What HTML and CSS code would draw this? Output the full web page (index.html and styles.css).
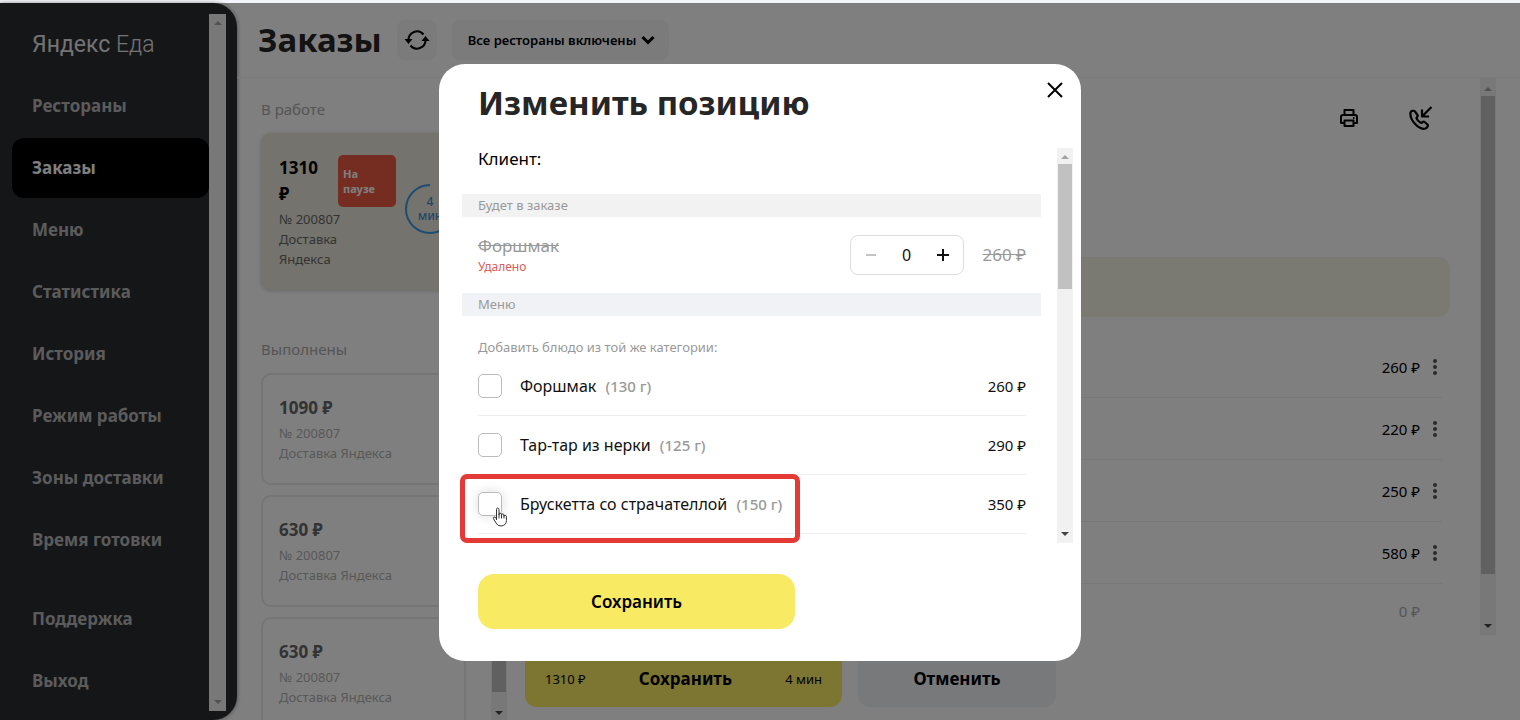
FILE: index.html
```html
<!DOCTYPE html>
<html lang="ru">
<head>
<meta charset="utf-8">
<title>Яндекс Еда — Заказы</title>
<link rel="stylesheet" href="styles.css">
</head>
<body>
<div class="app">
  <aside class="sidebar">
    <div class="sidebar-content">
      <div class="logo"><span class="logo-main">Яндекс</span> <span class="logo-sub">Еда</span></div>
      <nav class="nav">
        <a class="nav-link" href="#">Рестораны</a>
        <a class="nav-link active" href="#">Заказы</a>
        <a class="nav-link" href="#">Меню</a>
        <a class="nav-link" href="#">Статистика</a>
        <a class="nav-link" href="#">История</a>
        <a class="nav-link" href="#">Режим работы</a>
        <a class="nav-link" href="#">Зоны доставки</a>
        <a class="nav-link" href="#">Время готовки</a>
        <a class="nav-link secondary" href="#">Поддержка</a>
        <a class="nav-link" href="#">Выход</a>
      </nav>
    </div>
    <div class="scrollbar">
      <span class="arrow up"></span>
      <span class="arrow down"></span>
    </div>
  </aside>

  <main class="main">
    <header class="header">
      <h1 class="title">Заказы</h1>
      <button class="refresh" type="button" aria-label="Обновить">
        <svg width="26" height="26" viewBox="0 0 26 26" fill="none" stroke="#000" stroke-width="2">
          <path d="M4.500 13A8.500 8.500 0 0 1 19.500 7.500M21.500 13A8.500 8.500 0 0 1 6.500 18.500"/>
          <path d="M.5 12h8l-4 5zM17.500 14h8l-4-5z" fill="#000" stroke="none"/>
        </svg>
      </button>
      <button class="filter" type="button">Все рестораны включены
        <svg width="14" height="10" viewBox="0 0 14 10" fill="none" stroke="#000" stroke-width="3"><path d="M1.500 2L7 7.500 12.500 2"/></svg>
      </button>
    </header>

    <div class="workspace">
      <section class="orders">
        <div class="orders-list">
          <h2 class="group-title">В работе</h2>
          <article class="order current">
            <div class="order-info">
              <div class="order-sum">1310 ₽</div>
              <div class="order-meta">№ 200807</div>
              <div class="order-meta">Доставка Яндекса</div>
            </div>
            <div class="pause">На паузе</div>
            <div class="timer">
              <svg class="timer-ring" width="50" height="50" viewBox="0 0 50 50" fill="none" stroke="#3d9be6" stroke-width="2"><path d="M25 1A24 24 0 1 0 49 25"/></svg>
              <span>4<br>мин</span>
            </div>
          </article>
          <h2 class="group-title done-title">Выполнены</h2>
          <article class="order done">
            <div class="order-sum">1090 ₽</div>
            <div class="order-meta">№ 200807</div>
            <div class="order-meta">Доставка Яндекса</div>
          </article>
          <article class="order done">
            <div class="order-sum">630 ₽</div>
            <div class="order-meta">№ 200807</div>
            <div class="order-meta">Доставка Яндекса</div>
          </article>
          <article class="order done">
            <div class="order-sum">630 ₽</div>
            <div class="order-meta">№ 200807</div>
            <div class="order-meta">Доставка Яндекса</div>
          </article>
        </div>
        <div class="scrollbar">
          <span class="arrow up"></span>
          <span class="thumb"></span>
          <span class="arrow down dark"></span>
        </div>
      </section>

      <section class="detail">
        <div class="detail-scroll">
          <div class="detail-content">
            <div class="tools">
              <button class="tool" type="button" aria-label="Печать">
                <svg width="20" height="20" viewBox="0 0 20 20" fill="none" stroke="#000" stroke-width="2" stroke-linejoin="round">
                  <path d="M5.500 7V2h9v5M5 15H2V9q0-2 2-2h12q2 0 2 2v6h-3M5.500 12.500h9V18h-9zM14 10h1.500"/>
                </svg>
              </button>
              <button class="tool" type="button" aria-label="Позвонить">
                <svg width="24" height="24" viewBox="0 0 24 24" fill="none" stroke="#000" stroke-width="2.200" stroke-linejoin="round">
                  <path d="M2.500 6.500C1.500 14 11 24.500 17.500 22.500c2-1 3-3 2-4l-3-2.500c-1.500-1-2 .5-3 1-2-.5-4.500-3-5-5 .5-1.500 2-1.500 1-3L7 5.500c-1.500-1.500-4-.5-4.500 1z"/>
                  <path d="M23.500 1L14.500 10M14 3.500V10.500H21"/>
                </svg>
              </button>
            </div>
            <div class="notice"></div>
            <ul class="items">
              <li class="item"><span>260 ₽</span><button class="more" type="button" aria-label="Ещё"><i></i><i></i><i></i></button></li>
              <li class="item"><span>220 ₽</span><button class="more" type="button" aria-label="Ещё"><i></i><i></i><i></i></button></li>
              <li class="item"><span>250 ₽</span><button class="more" type="button" aria-label="Ещё"><i></i><i></i><i></i></button></li>
              <li class="item"><span>580 ₽</span><button class="more" type="button" aria-label="Ещё"><i></i><i></i><i></i></button></li>
            </ul>
            <div class="total">0 ₽</div>
          </div>
          <div class="scrollbar">
            <span class="arrow up"></span>
            <span class="thumb"></span>
            <span class="arrow down dark"></span>
          </div>
        </div>
        <footer class="actions">
          <button class="accept" type="button"><span>1310 ₽</span><b>Сохранить</b><span>4 мин</span></button>
          <button class="cancel" type="button">Отменить</button>
        </footer>
      </section>
    </div>
  </main>
</div>

<div class="overlay">
  <div class="modal" role="dialog" aria-labelledby="modal-title">
    <button class="close" type="button" aria-label="Закрыть">
      <svg width="16" height="16" viewBox="0 0 16 16" fill="none" stroke="#000" stroke-width="2"><path d="M1 1l14 14M15 1L1 15"/></svg>
    </button>
    <h2 class="modal-title" id="modal-title">Изменить позицию</h2>
    <div class="modal-scroll">
      <div class="modal-content">
        <p class="client">Клиент:</p>
        <h3 class="band">Будет в заказе</h3>
        <div class="position">
          <div class="position-name"><s>Форшмак</s><span class="removed">Удалено</span></div>
          <div class="stepper">
            <button class="step" type="button" aria-label="Меньше" disabled><svg width="12" height="12" viewBox="0 0 12 12" stroke="#c4c4c4" stroke-width="2"><path d="M1 6h10"/></svg></button>
            <output>0</output>
            <button class="step" type="button" aria-label="Больше"><svg width="12" height="12" viewBox="0 0 12 12" stroke="#111" stroke-width="2"><path d="M0 6h12M6 0v12"/></svg></button>
          </div>
          <s class="old-price">260 ₽</s>
        </div>
        <h3 class="band menu-band">Меню</h3>
        <p class="hint">Добавить блюдо из той же категории:</p>
        <ul class="dishes">
          <li class="dish">
            <input class="check" type="checkbox" id="dish-1">
            <label for="dish-1">Форшмак <span class="weight">(130 г)</span></label>
            <span class="price">260 ₽</span>
          </li>
          <li class="dish">
            <input class="check" type="checkbox" id="dish-2">
            <label for="dish-2">Тар-тар из нерки <span class="weight">(125 г)</span></label>
            <span class="price">290 ₽</span>
          </li>
          <li class="dish">
            <input class="check hovered" type="checkbox" id="dish-3">
            <label for="dish-3">Брускетта со страчателлой <span class="weight">(150 г)</span></label>
            <span class="price">350 ₽</span>
            <span class="highlight"></span>
            <svg class="pointer" width="16" height="20" viewBox="0 0 16 20" fill="#fff" stroke="#333" stroke-linejoin="round" stroke-linecap="round">
              <path d="M4.500 12.500V2.500Q4.500 1 5.700 1T7 2.500V8v-.8q0-1 1.200-1t1.300 1V8.500v-.6q0-1 1.200-1t1.200 1v1.300q0-.9 1.200-.9t1.300 1.200v4q0 5-5.400 5.500-3.500 0-5-3L1.500 11.700q-.7-1.200.4-1.700t2.100 1z"/>
              <path d="M7 8v3M9.500 8.500V11M12 9v2" fill="none"/>
            </svg>
          </li>
        </ul>
      </div>
      <div class="scrollbar">
        <span class="arrow up"></span>
        <span class="thumb"></span>
        <span class="arrow down dark"></span>
      </div>
    </div>
    <button class="save" type="button">Сохранить</button>
  </div>
</div>
</body>
</html>
```
FILE: styles.css
```css
* { box-sizing: border-box; }

body {
  margin: 0;
  padding-top: 3px;
  height: 100vh;
  overflow: hidden;
  background: #f4f5fa;
  color: #000;
  font: 16px/20px "Noto Sans", "Open Sans", sans-serif;
}

h1, h2, h3, p, ul { margin: 0; padding: 0; }
ul { list-style: none; }
button { margin: 0; padding: 0; border: 0; background: none; color: inherit; font: inherit; cursor: pointer; }
svg { display: block; }

.app { display: flex; height: 100%; background: #fff; }

/* Scrollbars */
.scrollbar {
  display: flex;
  flex: none;
  flex-direction: column;
  align-items: center;
  width: 17px;
  padding: 7px 0;
  background: #f1f1f1;
}
.arrow { border: 4px solid transparent; }
.arrow.up { border-top: 0; border-bottom-color: #a3a3a3; }
.arrow.down { margin-top: auto; border-bottom: 0; border-top-color: #a3a3a3; }
.arrow.dark { border-top-color: #444; }
.thumb { width: 14px; margin-top: 6px; background: #c1c1c1; }

/* Sidebar */
.sidebar {
  display: flex;
  flex: none;
  width: 237px;
  padding: 11px 11px 9px 0;
  border-radius: 0 24px 24px 0;
  background: #2a2c30;
  box-shadow: 0 0 4px #888;
}
.sidebar-content { flex: 1; padding-left: 12px; }
.logo {
  padding: 13px 0 13px 20px;
  color: #e6e6e6;
  font: 23px/36px "Roboto", sans-serif;
  white-space: nowrap;
}
.logo-sub { font-weight: 300; }
.nav { display: flex; flex-direction: column; gap: 2px; }
.nav-link {
  padding: 20px;
  border-radius: 12px;
  color: #b6b6b8;
  font-size: 17px;
  font-weight: 700;
  text-decoration: none;
}
.nav-link.active { background: #000; color: #fff; }
.nav-link.secondary { margin-top: 17px; }

/* Header */
.main { display: flex; flex: 1; flex-direction: column; min-width: 0; }
.header {
  display: flex;
  flex: none;
  align-items: center;
  height: 75px;
  padding-left: 21px;
  border-bottom: 1px solid #f4f4f4;
}
.title { color: #262626; font-size: 33px; line-height: 48px; }
.refresh, .filter { border-radius: 8px; background: #f7f7f7; }
.refresh { display: grid; place-items: center; width: 40px; height: 40px; margin-left: 15px; }
.filter {
  display: flex;
  align-items: center;
  gap: 5px;
  height: 40px;
  margin-left: 15px;
  padding: 0 14px 0 16px;
  font-size: 13px;
  font-weight: 600;
}

/* Orders column */
.workspace { display: flex; flex: 1; min-height: 0; }
.orders { display: flex; flex: none; width: 270px; padding-left: 24px; overflow: hidden; }
.orders-list { flex: 1; min-width: 0; padding: 21px 25px 0 0; }
.orders .scrollbar { padding: 7px 0 5px; width: 16px; }
.orders .thumb { flex: 1; }
.orders .arrow.down { margin-top: 19px; }
.group-title { margin-bottom: 14px; color: #aaa; font-size: 15px; font-weight: 400; line-height: 20px; }
.done-title { margin-top: 49px; }
.order { padding: 20px 16px; border: 2px solid #eaeaea; border-radius: 10px; }
.order-sum { margin-bottom: 2px; font-size: 17px; font-weight: 700; line-height: 26px; }
.order-meta { color: #666; font-size: 13px; line-height: 20px; }
.order.current {
  display: flex;
  gap: 9px;
  height: 157px;
  padding-right: 8px;
  border-color: transparent;
  background: #e9e7da;
  box-shadow: 0 1px 4px #ccc;
}
.order-info { flex: none; width: 50px; }
.current .order-meta:not(:last-child) { white-space: nowrap; }
.pause {
  flex: none;
  width: 58px;
  height: 52px;
  padding: 11px 5px;
  border-radius: 5px;
  background: #ec5a42;
  color: #fff;
  font-size: 11px;
  font-weight: 700;
  line-height: 15px;
}
.timer {
  display: grid;
  flex: none;
  place-items: center;
  width: 50px;
  height: 50px;
  margin-top: 29px;
  color: #3d8fd0;
  font-size: 12px;
  font-weight: 500;
  line-height: 14px;
  text-align: center;
}
.timer > * { grid-area: 1 / 1; }
.order.done { height: 112px; margin-bottom: 10px; }
.done .order-sum { color: #666; }
.done .order-meta { color: #b0b0b0; }

/* Order details */
.detail { display: flex; flex: 1; flex-direction: column; min-width: 0; padding: 0 24px 13px 18px; }
.detail-scroll { display: flex; flex: 1; min-height: 0; }
.detail-content { flex: 1; padding: 16px 30px 0 0; }
.detail .scrollbar { width: 16px; padding: 9px 0 7px; }
.detail .thumb { width: 14px; height: 478px; margin-top: 5px; }
.tools { display: flex; justify-content: flex-end; gap: 11px; }
.tool { display: grid; place-items: center; width: 60px; height: 48px; }
.notice { height: 60px; margin: 115px 0 19px; border-radius: 12px; background: #f5f4e7; }
.items { padding-right: 8px; font-size: 15px; }
.item { display: flex; align-items: center; justify-content: flex-end; gap: 8px; height: 62px; border-bottom: 1px solid #eee; }
.more { display: flex; flex-direction: column; align-items: center; gap: 2px; width: 14px; }
.more i { width: 4px; height: 4px; border-radius: 50%; background: #555; }
.total { padding: 17px 30px 0 0; color: #aaa; font-size: 15px; text-align: right; }
.actions { display: flex; flex: none; gap: 16px; margin-top: 16px; }
.accept, .cancel { height: 56px; border-radius: 12px; font-size: 17px; }
.accept {
  display: flex;
  align-items: center;
  justify-content: space-between;
  width: 317px;
  padding: 0 20px;
  background: #fbeb64;
}
.accept span { font-size: 13px; }
.cancel { width: 198px; background: #f0f2f4; font-weight: 700; }

/* Dialog */
.overlay {
  position: fixed;
  inset: 3px 0 0;
  display: flex;
  align-items: center;
  justify-content: center;
  padding-top: 2px;
  background: rgba(0, 0, 0, .5);
}
.modal {
  position: relative;
  width: 642px;
  max-width: 100%;
  padding: 15px 8px 32px 23px;
  border-radius: 26px;
  background: #fff;
}
.close { position: absolute; top: 14px; right: 14px; display: grid; place-items: center; width: 24px; height: 24px; }
.modal-title { padding-left: 16px; color: #262626; font-size: 33px; line-height: 48px; }
.modal-scroll { display: flex; margin: 21px 0 31px; }
.modal-content { flex: 1; padding-right: 16px; }
.modal-scroll .scrollbar { width: 16px; }
.modal-scroll .thumb { height: 125px; margin-top: 5px; }
.client { padding: 1px 16px 25px; font-size: 17px; }
.band { padding: 0 16px; background: #f2f2f3; color: #999; font-size: 13px; font-weight: 400; line-height: 23px; }
.menu-band { background: #f1f2f5; }
.position { display: flex; align-items: center; height: 76px; padding: 0 15px 0 16px; color: #999; }
.position-name { display: flex; flex: 1; flex-direction: column; padding-top: 4px; font-size: 17px; }
.removed { color: #dc5b5b; font-size: 12px; line-height: 22px; }
.old-price { font-size: 17px; }
.stepper {
  display: flex;
  align-items: center;
  justify-content: space-between;
  width: 114px;
  height: 40px;
  margin-right: 19px;
  padding: 0 10px;
  border: 1px solid #ddd;
  border-radius: 8px;
  color: #111;
}
.step { display: grid; place-items: center; width: 20px; height: 24px; }
.hint { padding: 21px 16px 7px; color: #999; font-size: 13px; }
.dishes { padding: 0 15px 9px 16px; }
.dish { position: relative; display: flex; align-items: center; height: 59px; border-bottom: 1px solid #eee; color: #111; }
.dish:first-child { height: 52px; padding-bottom: 8px; }
.check { flex: none; appearance: none; width: 24px; height: 24px; margin: 0 18px 0 0; border: 1px solid #bbb; border-radius: 5px; background: #fff; }
.check.hovered { box-shadow: 0 0 12px #ddd; }
.weight { margin-left: 5px; color: #999; font-size: 15px; font-weight: 500; }
.price { margin-left: auto; font-size: 15px; }
.highlight { position: absolute; top: -1px; left: -18px; width: 340px; height: 69px; border: 5px solid #e43a35; border-radius: 7px; }
.pointer { position: absolute; top: 32px; left: 14px; }
.save { display: block; width: 317px; height: 55px; margin-left: 16px; border-radius: 16px; background: #f9ea64; font-size: 17px; font-weight: 600; }
```
